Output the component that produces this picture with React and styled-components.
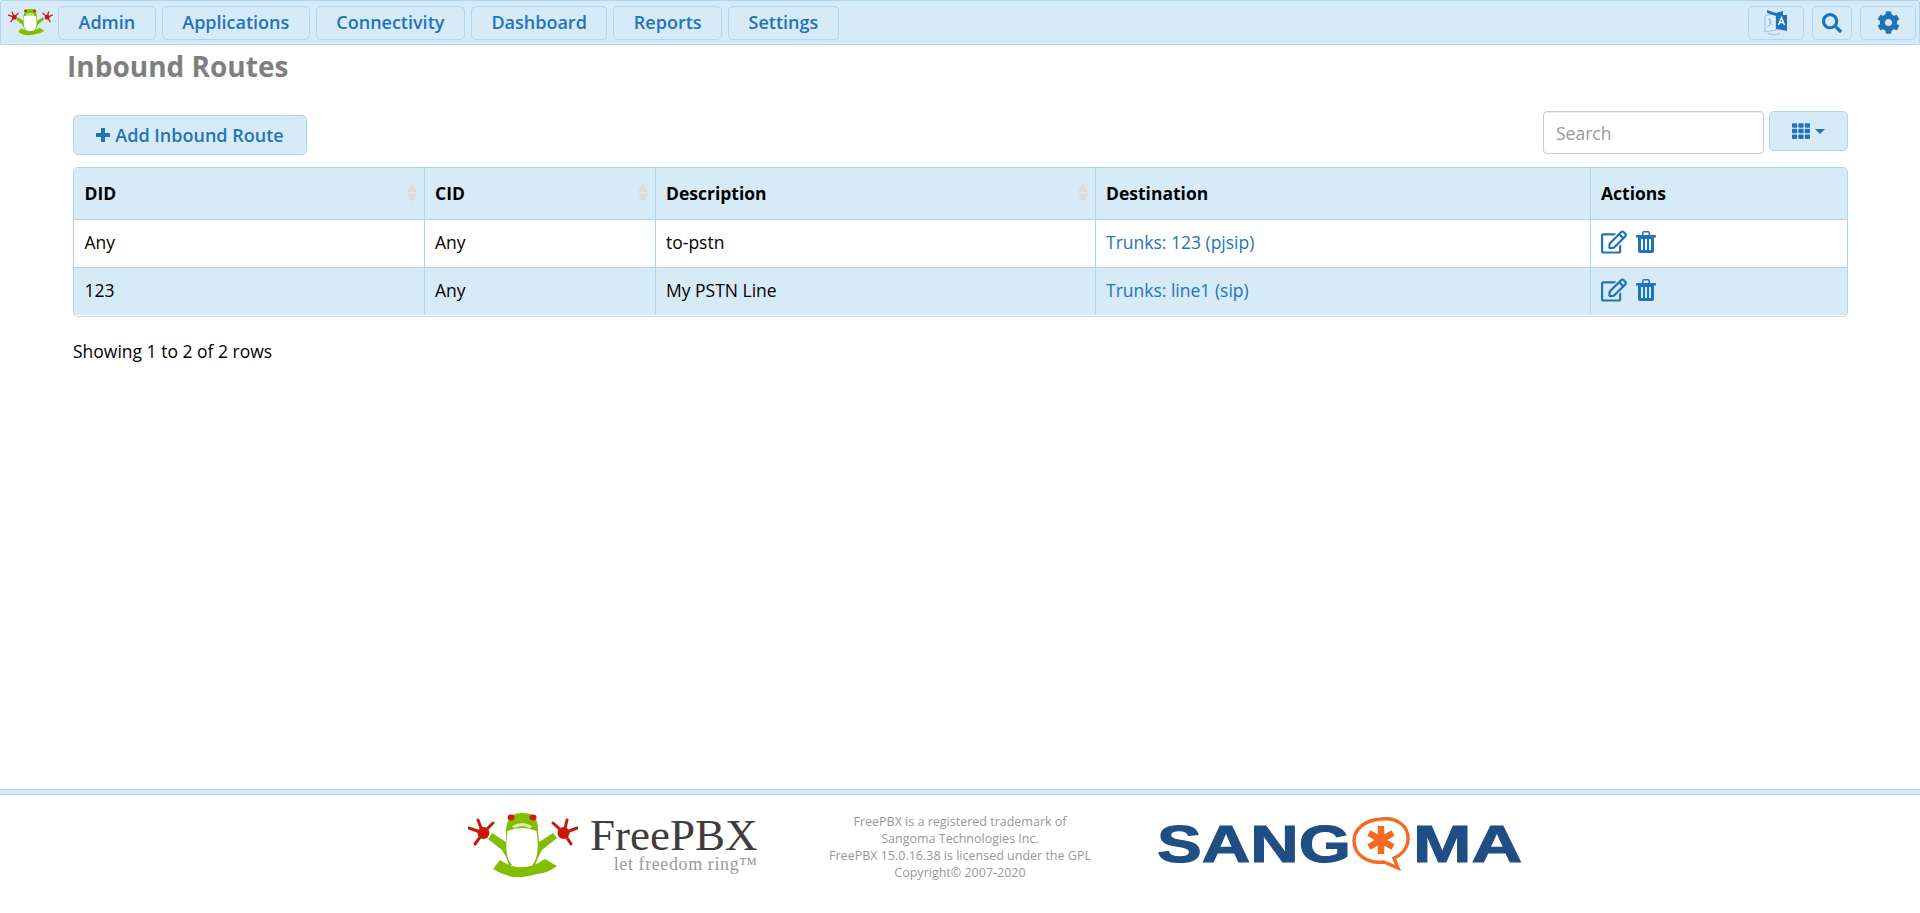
import React from 'react';
import styled, { createGlobalStyle } from 'styled-components';
import { FaSearch, FaCog, FaTh, FaRegEdit } from 'react-icons/fa';

const BLUE = '#d7eaf8';
const LINE = '#aed6f1';
const LINK = '#1f74b8';

const menu = ['Admin', 'Applications', 'Connectivity', 'Dashboard', 'Reports', 'Settings'];
const sortable = ['DID', 'CID', 'Description'];

const rows = [
  { did: 'Any', cid: 'Any', desc: 'to-pstn', dest: 'Trunks: 123 (pjsip)' },
  { did: '123', cid: 'Any', desc: 'My PSTN Line', dest: 'Trunks: line1 (sip)' },
];

const FrogLogo = ({ width }) => (
  <svg width={width} viewBox="0 0 110 64">
    <path
      d="M38 17 Q39 6 44 2 Q54 -2 65 2 Q70 6 70 17 L71 29 L85 20 L89 25 L74 37 Q70 44 67 52 L41 52 Q39 44 34 37 L20 26 L24 20 L38 29 Z"
      fill="#82bd00"
    />
    <path d="M39.5 18 C37 36 37 54 54 57 C71 54 71 36 68.5 18 Q54 12 39.5 18 Z" fill="#fff" />
    <path d="M44 13 Q54 7 64 13 L62 15.5 Q54 10.5 46 15.5 Z" fill="#d9eeb0" />
    <path d="M25 56 L32 47 Q54 62 77 46 L89 53 Q80 60 69 61 Q55 65 45 64 Q34 62 25 56 Z" fill="#82bd00" />
    <ellipse cx="43" cy="4.5" rx="3.5" ry="3" fill="#d0180c" />
    <ellipse cx="65" cy="4.5" rx="3.5" ry="3" fill="#d0180c" />
    <g stroke="#c8170c" strokeWidth="3" strokeLinecap="round" fill="none">
      <path d="M15 20 L1 15 M15 20 L10 7 M15 20 L25 10 M15 20 L7 31" />
      <path d="M96 20 L109 15 M96 20 L99 7 M96 20 L85 10 M96 20 L103 31" />
    </g>
    <circle cx="15.5" cy="20" r="6" fill="#c8170c" />
    <circle cx="95.5" cy="20" r="6" fill="#c8170c" />
  </svg>
);

const LanguageIcon = () => (
  <svg width="24" height="27" viewBox="0 0 24 27">
    <path d="M1 7 L12 4 V21 L1 23 Z" fill="#dfeefa" stroke="#8db8da" strokeWidth="0.8" />
    <path d="M4 10 L8 13 M6 9 L6 16 L3 18 M5 13 L9 16" stroke="#7aa9cf" strokeWidth="0.8" fill="none" />
    <path d="M3 1 L12 4 V7 L3 4 Z" fill={LINK} />
    <path d="M12 4 L19 2 V6 H23 V22 L12 20 Z" fill={LINK} />
    <path d="M14.5 16 L17.5 8.5 L20.5 16 M15.5 13.5 H19.5" stroke="#fff" strokeWidth="1.3" fill="none" />
    <path d="M4 24.5 Q10 27.5 16 24.5" stroke="#8db8da" strokeWidth="0.8" fill="none" />
  </svg>
);

const PlusIcon = () => (
  <svg width="14" height="14" viewBox="0 0 14 14" fill="currentColor">
    <path d="M5 0 H9 V5 H14 V9 H9 V14 H5 V9 H0 V5 H5 Z" />
  </svg>
);

const TrashIcon = () => (
  <svg width="20" height="22" viewBox="0 0 20 22" fill="currentColor">
    <path
      fillRule="evenodd"
      d="M6 4 V2 Q6 0 8 0 H12 Q14 0 14 2 V4 H19 Q20 4 20 5 V6.5 H18 V20 Q18 22 16 22 H4 Q2 22 2 20 V6.5 H0 V5 Q0 4 1 4 Z M7.5 4 H12.5 V2.2 Q12.5 1.5 12 1.5 H8 Q7.5 1.5 7.5 2.2 Z M5 8 V19 H7 V8 Z M9 8 V19 H11 V8 Z M13 8 V19 H15 V8 Z"
    />
  </svg>
);

const SortArrows = () => (
  <svg width="10" height="18" viewBox="0 0 10 18">
    <path d="M5 0 L10 8 H0 Z M5 18 L0 10 H10 Z" fill="#dcdcdc" />
  </svg>
);

const SangomaMark = () => (
  <svg width="60" height="54" viewBox="0 0 60 54">
    <path
      d="M30 2 C46 0 58 9 57 23 C56 33 49 39 43 41 L47 51 L33 45 C17 47 3 38 3 24 C3 12 14 3 30 2 Z"
      fill="none"
      stroke="#f26b21"
      strokeWidth="3.4"
    />
    <g stroke="#f26b21" strokeWidth="6.5">
      <path d="M30 9 V37 M18 16 L42 30 M42 16 L18 30" />
    </g>
  </svg>
);

const App = () => {
  return (
    <Page>
      <GlobalStyle />
      <NavBar>
        <NavLogo><FrogLogo width={45} /></NavLogo>
        {menu.map((item) => <NavButton key={item}>{item}</NavButton>)}
        <NavSpacer />
        <IconButton $width={56}><LanguageIcon /></IconButton>
        <IconButton $width={40}><FaSearch size={20} /></IconButton>
        <IconButton $width={56}><FaCog size={23} /></IconButton>
      </NavBar>

      <Content>
        <Title>Inbound Routes</Title>
        <Toolbar>
          <AddButton><PlusIcon />Add Inbound Route</AddButton>
          <ToolbarRight>
            <Search placeholder="Search" />
            <ColumnsButton><FaTh size={18} /><Caret /></ColumnsButton>
          </ToolbarRight>
        </Toolbar>

        <TableWrap>
          <Table>
            <colgroup>
              <col style={{ width: 350 }} />
              <col style={{ width: 231 }} />
              <col style={{ width: 440 }} />
              <col style={{ width: 495 }} />
              <col />
            </colgroup>
            <thead>
              <tr>
                {sortable.map((name) => (
                  <HeadCell key={name}>
                    <HeadInner>{name}<SortArrows /></HeadInner>
                  </HeadCell>
                ))}
                <HeadCell>Destination</HeadCell>
                <HeadCell>Actions</HeadCell>
              </tr>
            </thead>
            <tbody>
              {rows.map((row, i) => (
                <Row key={row.did} $striped={i % 2 === 1}>
                  <Cell>{row.did}</Cell>
                  <Cell>{row.cid}</Cell>
                  <Cell>{row.desc}</Cell>
                  <Cell><RowLink>{row.dest}</RowLink></Cell>
                  <Cell>
                    <Actions>
                      <FaRegEdit size={26} />
                      <TrashIcon />
                    </Actions>
                  </Cell>
                </Row>
              ))}
            </tbody>
          </Table>
        </TableWrap>
        <Summary>Showing 1 to 2 of 2 rows</Summary>
      </Content>

      <Footer>
        <FooterBand />
        <FooterRow>
          <FreePbxLogo>
            <FrogLogo width={110} />
            <FreePbxText>
              <FreePbxName>FreePBX</FreePbxName>
              <FreePbxTag>let freedom ring™</FreePbxTag>
            </FreePbxText>
          </FreePbxLogo>
          <Legal>
            FreePBX is a registered trademark of<br />
            Sangoma Technologies Inc.<br />
            FreePBX 15.0.16.38 is licensed under the GPL<br />
            Copyright© 2007-2020
          </Legal>
          <SangomaLogo>
            <SangomaWord $width={192}><SangomaLetters $scale={1.29}>SANG</SangomaLetters></SangomaWord>
            <SangomaMark />
            <SangomaWord $width={109}><SangomaLetters $scale={1.35}>MA</SangomaLetters></SangomaWord>
          </SangomaLogo>
        </FooterRow>
      </Footer>
    </Page>
  );
};
export default App;

const GlobalStyle = createGlobalStyle`
  * { box-sizing: border-box; }
  html, body { margin: 0; padding: 0; background: #fff; }
  body { font-family: "Open Sans", "Liberation Sans", sans-serif; font-size: 17.5px; color: #000; }
`;

const Page = styled.div`
  display: flex;
  flex-direction: column;
  height: 913px;
  overflow: hidden;
`;

const NavBar = styled.nav`
  display: flex;
  align-items: center;
  gap: 6px;
  height: 45px;
  padding: 0 3px 0 7px;
  background: ${BLUE};
  border: 1px solid ${LINE};
  border-radius: 2px;
`;

const NavLogo = styled.div`
  display: flex;
  width: 45px;
  margin-right: -1px;
`;

const NavButton = styled.button`
  height: 34px;
  padding: 0 19.5px 2px;
  font: 600 18px "Open Sans", sans-serif;
  color: ${LINK};
  background: ${BLUE};
  border: 1px solid ${LINE};
  border-radius: 5px;
`;

const NavSpacer = styled.div`
  flex: 1;
`;

const IconButton = styled.button`
  display: flex;
  align-items: center;
  justify-content: center;
  width: ${(p) => p.$width}px;
  height: 34px;
  padding: 0;
  margin-left: 2px;
  color: ${LINK};
  background: ${BLUE};
  border: 1px solid ${LINE};
  border-radius: 5px;
`;

const Content = styled.main`
  flex: 1;
  padding: 0 72px 0 73px;
`;

const Title = styled.h1`
  margin: 3px 0 0 -6px;
  font-size: 28px;
  line-height: 36px;
  font-weight: 700;
  color: #7f7f7f;
`;

const Toolbar = styled.div`
  display: flex;
  align-items: flex-start;
  justify-content: space-between;
  margin-top: 27px;
`;

const AddButton = styled.button`
  display: flex;
  align-items: center;
  gap: 5px;
  justify-content: center;
  width: 234px;
  height: 40px;
  margin-top: 4px;
  padding: 0;
  font: 600 18px "Open Sans", sans-serif;
  color: ${LINK};
  background: ${BLUE};
  border: 1px solid ${LINE};
  border-radius: 5px;
`;

const ToolbarRight = styled.div`
  display: flex;
  gap: 5px;
`;

const Search = styled.input`
  width: 221px;
  height: 43px;
  padding: 0 12px;
  font: 400 17.5px "Open Sans", sans-serif;
  border: 1px solid #ccc;
  border-radius: 4px;
  box-shadow: inset 0 1px 1px rgba(0, 0, 0, 0.075);
  outline: none;
  &::placeholder { color: #999; }
`;

const ColumnsButton = styled.button`
  display: flex;
  align-items: center;
  justify-content: center;
  gap: 5px;
  width: 79px;
  height: 40px;
  padding: 0;
  color: ${LINK};
  background: ${BLUE};
  border: 1px solid ${LINE};
  border-radius: 5px;
`;

const Caret = styled.span`
  width: 0;
  height: 0;
  border-top: 5px solid ${LINK};
  border-left: 5px solid transparent;
  border-right: 5px solid transparent;
`;

const TableWrap = styled.div`
  margin-top: 12px;
  padding-bottom: 1px;
  border: 1px solid ${LINE};
  border-bottom: 1px solid #bfdcf3;
  border-radius: 5px;
  overflow: hidden;
`;

const Table = styled.table`
  width: 100%;
  table-layout: fixed;
  border-collapse: collapse;
`;

const HeadCell = styled.th`
  height: 51px;
  padding: 0 10px 0 10.5px;
  text-align: left;
  font-size: 17.5px;
  font-weight: 700;
  background: ${BLUE};
  border-left: 1px solid ${LINE};
  border-bottom: 1px solid ${LINE};
  &:first-child { border-left: 0; }
`;

const HeadInner = styled.div`
  display: flex;
  align-items: center;
  justify-content: space-between;
  margin-right: -3px;
`;

const Row = styled.tr`
  background: ${(p) => (p.$striped ? BLUE : '#fff')};
  border-bottom: 1px solid ${LINE};
  &:last-child { border-bottom: 0; }
`;

const Cell = styled.td`
  height: 48px;
  padding: 0 10px 2px 10.5px;
  font-size: 17.5px;
  border-left: 1px solid ${LINE};
  &:first-child { border-left: 0; }
`;

const RowLink = styled.a`
  color: ${LINK};
`;

const Actions = styled.div`
  display: flex;
  align-items: center;
  gap: 9px;
  color: ${LINK};
`;

const Summary = styled.div`
  margin-top: 22px;
  font-size: 17.5px;
  line-height: 24px;
`;

const Footer = styled.footer`
  display: flex;
  flex-direction: column;
`;

const FooterBand = styled.div`
  height: 6px;
  background: ${BLUE};
  border-top: 1px solid ${LINE};
  border-bottom: 1px solid ${LINE};
`;

const FooterRow = styled.div`
  display: flex;
  align-items: flex-start;
  height: 118px;
  padding: 18px 0 0 468px;
`;

const FreePbxLogo = styled.div`
  display: flex;
  align-items: flex-start;
  gap: 12px;
  width: 347px;
`;

const FreePbxText = styled.div`
  display: flex;
  flex-direction: column;
  font-family: "Liberation Serif", serif;
  text-align: right;
`;

const FreePbxName = styled.div`
  font-size: 45px;
  line-height: 44px;
  color: #3d3d3d;
`;

const FreePbxTag = styled.div`
  margin-top: -2px;
  font-size: 18px;
  line-height: 18px;
  letter-spacing: 0.6px;
  color: #9a9a9a;
`;

const Legal = styled.div`
  width: 290px;
  text-align: center;
  font-size: 12.5px;
  line-height: 17px;
  color: #999;
`;

const SangomaLogo = styled.div`
  display: flex;
  align-items: center;
  margin: 4px 0 0 50px;
`;

const SangomaWord = styled.div`
  width: ${(p) => p.$width}px;
  margin: 0 2px;
  white-space: nowrap;
`;

const SangomaLetters = styled.span`
  display: inline-block;
  font-family: "Liberation Sans", sans-serif;
  font-weight: 700;
  font-size: 52px;
  line-height: 52px;
  color: #1f4e85;
  -webkit-text-stroke: 1.1px #1f4e85;
  transform: scaleX(${(p) => p.$scale});
  transform-origin: left center;
`;
